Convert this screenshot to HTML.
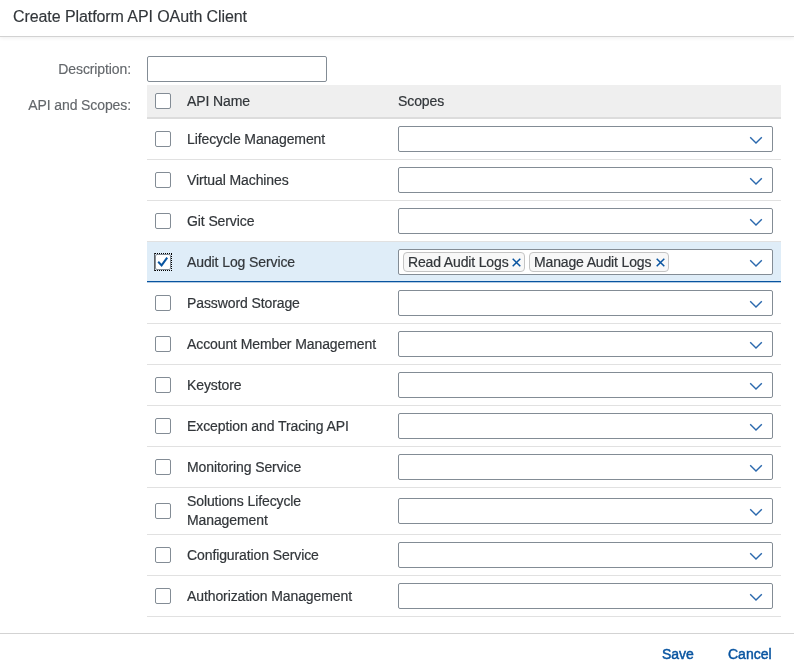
<!DOCTYPE html>
<html><head><meta charset="utf-8"><style>
*{box-sizing:border-box;margin:0;padding:0}
html,body{-webkit-font-smoothing:antialiased;width:794px;height:672px;overflow:hidden;background:#fff;font-family:"Liberation Sans",sans-serif;color:#32363a}
.a{position:absolute}
.hdr{left:0;top:0;width:794px;height:37px;border-bottom:1px solid #d2d2d2;box-shadow:0 1px 4px rgba(0,0,0,0.07)}
.title{left:13px;top:7.8px;letter-spacing:-0.08px;font-size:16px;line-height:18px;color:#32363a;-webkit-text-stroke:0.15px #32363a;white-space:nowrap}
.lbl{font-size:14px;letter-spacing:-0.1px;color:#63676b;-webkit-text-stroke:0.15px #63676b;white-space:nowrap;line-height:16px}
.inp{left:147px;top:56px;width:180px;height:26px;border:1px solid #838c95;border-radius:2px;background:#fff}
.hbg{left:147px;top:85px;width:634px;height:32px;background:#efefef}
.hline{left:147px;top:117px;width:634px;height:2px;background:#dcdcdc}
.line{left:147px;width:634px;height:1px;background:#e1e1e1}
.selbg{left:147px;width:634px;background:#dfedf8}
.blue{left:147px;width:634px;height:1px;background:#0854a0;box-shadow:0 1px 0 rgba(8,84,160,0.3)}
.cb{left:155px;width:16px;height:16px;border:1px solid #838c95;border-radius:2px;background:#fff}
.name{left:187px;font-size:14px;letter-spacing:-0.1px;-webkit-text-stroke:0.2px #32363a;color:#32363a;white-space:nowrap;line-height:16px}
.sel{left:398px;width:375px;height:26px;border:1px solid #838c95;border-radius:2px;background:#fff}
.arr{position:absolute;left:350px;top:9px}
.tok{position:absolute;top:2px;height:20px;border:1px solid #c4c4c4;border-radius:4px;background:#f8f8f8;font-size:14px;letter-spacing:-0.15px;-webkit-text-stroke:0.2px #32363a;line-height:16px;color:#32363a;white-space:nowrap}
.tok span{position:absolute;left:4px;top:1px}
.tok .x{position:absolute;top:5px}
.ftr{left:0;top:633px;width:794px;height:1px;background:#d3d3d3}
.btn{font-size:14px;line-height:16px;color:#0854a0;font-weight:normal;-webkit-text-stroke:0.45px #0854a0;white-space:nowrap}
</style></head><body><div id="w" style="position:absolute;left:0;top:0;width:794px;height:672px;will-change:transform">
<div class="a hdr"></div><div class="a title">Create Platform API OAuth Client</div>
<div class="a lbl" style="right:663px;top:61px">Description:</div>
<div class="a inp"></div>
<div class="a lbl" style="right:663px;top:97px">API and Scopes:</div>
<div class="a hbg"></div><div class="a hline"></div>
<div class="a cb" style="top:93px"></div>
<div class="a name" style="top:93px">API Name</div><div class="a name" style="left:398px;top:93px">Scopes</div>
<div class="a cb" style="top:131px"></div>
<div class="a name" style="top:131px">Lifecycle Management</div>
<div class="a sel" style="top:126px"><svg class="arr" width="14" height="9" viewBox="0 0 14 9"><path d="M1.2 1.2 L7 7 L12.8 1.2" fill="none" stroke="#2a68ad" stroke-width="1.4"/></svg></div>
<div class="a line" style="top:159px"></div>
<div class="a cb" style="top:172px"></div>
<div class="a name" style="top:172px">Virtual Machines</div>
<div class="a sel" style="top:167px"><svg class="arr" width="14" height="9" viewBox="0 0 14 9"><path d="M1.2 1.2 L7 7 L12.8 1.2" fill="none" stroke="#2a68ad" stroke-width="1.4"/></svg></div>
<div class="a line" style="top:200px"></div>
<div class="a cb" style="top:213px"></div>
<div class="a name" style="top:213px">Git Service</div>
<div class="a sel" style="top:208px"><svg class="arr" width="14" height="9" viewBox="0 0 14 9"><path d="M1.2 1.2 L7 7 L12.8 1.2" fill="none" stroke="#2a68ad" stroke-width="1.4"/></svg></div>
<div class="a line" style="top:241px"></div>
<div class="a selbg" style="top:242px;height:40px"></div>
<div class="a cb" style="top:254px"><div style="position:absolute;left:-2px;top:-2px;width:18px;height:18px;border:1px dotted #000;border-left:1px solid #5a5e62"></div><svg style="position:absolute;left:-1px;top:-1px" width="16" height="16" viewBox="0 0 16 16"><path d="M3.2 7.8 L6.6 11.4 L12.2 3.6" fill="none" stroke="#0854a0" stroke-width="2"/></svg></div>
<div class="a name" style="top:254px">Audit Log Service</div>
<div class="a sel" style="top:249px"><div class="tok" style="left:4px;width:122px"><span>Read Audit Logs</span><svg class="x" style="left:107.5px;top:4.5px" width="9" height="9" viewBox="0 0 9 9"><path d="M0.7 0.7 L8.3 8.3 M8.3 0.7 L0.7 8.3" fill="none" stroke="#0854a0" stroke-width="1.5"/></svg></div><div class="tok" style="left:130px;width:140px"><span>Manage Audit Logs</span><svg class="x" style="left:125.5px;top:4.5px" width="9" height="9" viewBox="0 0 9 9"><path d="M0.7 0.7 L8.3 8.3 M8.3 0.7 L0.7 8.3" fill="none" stroke="#0854a0" stroke-width="1.5"/></svg></div><svg class="arr" width="14" height="9" viewBox="0 0 14 9"><path d="M1.2 1.2 L7 7 L12.8 1.2" fill="none" stroke="#2a68ad" stroke-width="1.4"/></svg></div>
<div class="a blue" style="top:281px"></div>
<div class="a cb" style="top:295px"></div>
<div class="a name" style="top:295px">Password Storage</div>
<div class="a sel" style="top:290px"><svg class="arr" width="14" height="9" viewBox="0 0 14 9"><path d="M1.2 1.2 L7 7 L12.8 1.2" fill="none" stroke="#2a68ad" stroke-width="1.4"/></svg></div>
<div class="a line" style="top:323px"></div>
<div class="a cb" style="top:336px"></div>
<div class="a name" style="top:336px">Account Member Management</div>
<div class="a sel" style="top:331px"><svg class="arr" width="14" height="9" viewBox="0 0 14 9"><path d="M1.2 1.2 L7 7 L12.8 1.2" fill="none" stroke="#2a68ad" stroke-width="1.4"/></svg></div>
<div class="a line" style="top:364px"></div>
<div class="a cb" style="top:377px"></div>
<div class="a name" style="top:377px">Keystore</div>
<div class="a sel" style="top:372px"><svg class="arr" width="14" height="9" viewBox="0 0 14 9"><path d="M1.2 1.2 L7 7 L12.8 1.2" fill="none" stroke="#2a68ad" stroke-width="1.4"/></svg></div>
<div class="a line" style="top:405px"></div>
<div class="a cb" style="top:418px"></div>
<div class="a name" style="top:418px">Exception and Tracing API</div>
<div class="a sel" style="top:413px"><svg class="arr" width="14" height="9" viewBox="0 0 14 9"><path d="M1.2 1.2 L7 7 L12.8 1.2" fill="none" stroke="#2a68ad" stroke-width="1.4"/></svg></div>
<div class="a line" style="top:446px"></div>
<div class="a cb" style="top:459px"></div>
<div class="a name" style="top:459px">Monitoring Service</div>
<div class="a sel" style="top:454px"><svg class="arr" width="14" height="9" viewBox="0 0 14 9"><path d="M1.2 1.2 L7 7 L12.8 1.2" fill="none" stroke="#2a68ad" stroke-width="1.4"/></svg></div>
<div class="a line" style="top:487px"></div>
<div class="a cb" style="top:503px"></div>
<div class="a name" style="top:492px;line-height:19px">Solutions Lifecycle<br>Management</div>
<div class="a sel" style="top:498px"><svg class="arr" width="14" height="9" viewBox="0 0 14 9"><path d="M1.2 1.2 L7 7 L12.8 1.2" fill="none" stroke="#2a68ad" stroke-width="1.4"/></svg></div>
<div class="a line" style="top:534px"></div>
<div class="a cb" style="top:547px"></div>
<div class="a name" style="top:547px">Configuration Service</div>
<div class="a sel" style="top:542px"><svg class="arr" width="14" height="9" viewBox="0 0 14 9"><path d="M1.2 1.2 L7 7 L12.8 1.2" fill="none" stroke="#2a68ad" stroke-width="1.4"/></svg></div>
<div class="a line" style="top:575px"></div>
<div class="a cb" style="top:588px"></div>
<div class="a name" style="top:588px">Authorization Management</div>
<div class="a sel" style="top:583px"><svg class="arr" width="14" height="9" viewBox="0 0 14 9"><path d="M1.2 1.2 L7 7 L12.8 1.2" fill="none" stroke="#2a68ad" stroke-width="1.4"/></svg></div>
<div class="a line" style="top:616px"></div>
<div class="a ftr"></div>
<div class="a btn" style="left:662px;top:646px">Save</div>
<div class="a btn" style="left:728px;top:646px">Cancel</div>
</div></body></html>
